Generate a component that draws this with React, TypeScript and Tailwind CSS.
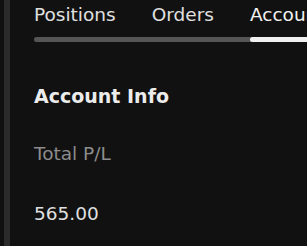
const tabs = ["Positions", "Orders", "Account", "History"];

export default function App() {
  const active = 2;
  return (
    <div
      className="flex h-[246px] w-[307px] overflow-hidden bg-[#111111] text-[#e8e8e8]"
      style={{ fontFamily: '"DejaVu Sans", sans-serif' }}
    >
      <div className="ml-[4px] w-[6px] shrink-0 bg-[#2b2b2b]" />
      <div className="min-w-0 flex-1 pl-[24px]">
        <div className="relative pt-[3px]">
          <div className="flex gap-[36px] whitespace-nowrap text-[18.5px] leading-[24px]">
            {tabs.map((t, i) => (
              <div key={t} className="relative shrink-0 pb-[10px]">
                <span className={i === active ? "text-[#f2f2f2]" : "text-[#e0e0e0]"}>{t}</span>
              </div>
            ))}
          </div>
          <div className="relative h-[5px] w-[500px] rounded-full bg-[#555555]">
            <div className="absolute left-[216px] top-0 h-[5px] w-[120px] rounded-l-full bg-[#f0f0f0]" />
          </div>
        </div>

        <h2 className="mt-[42px] text-[19px] font-bold leading-[24px] text-[#ececec]">Account Info</h2>
        <div className="mt-[34px] text-[18.5px] leading-[24px] text-[#8c8c8c]">Total P/L</div>
        <div className="mt-[36px] text-[18.5px] leading-[24px] text-[#e0e0e0]">565.00</div>
      </div>
    </div>
  );
}
